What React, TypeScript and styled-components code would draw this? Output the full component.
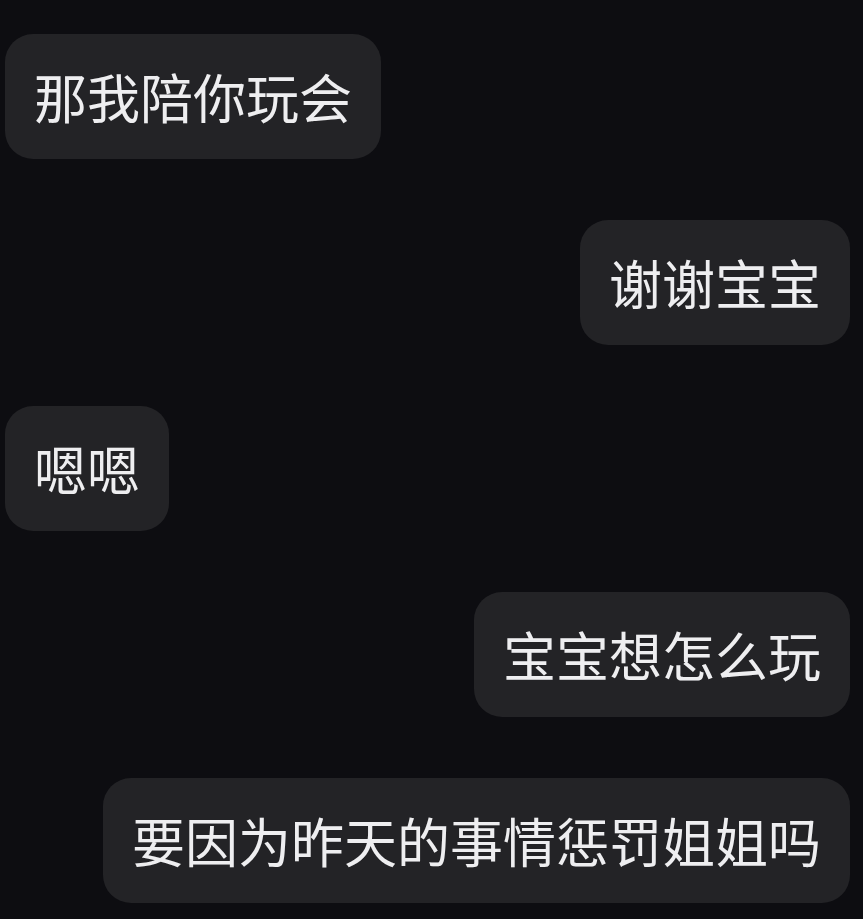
import styled, { createGlobalStyle } from 'styled-components';

const GlobalStyle = createGlobalStyle`
  html, body {
    margin: 0;
    padding: 0;
    background: #0d0d11;
  }
  body {
    font-family: "Noto Sans CJK SC", "Noto Sans", sans-serif;
  }
`

const Thread = styled.div`
  display: flex;
  flex-direction: column;
  gap: 61px;
  padding: 34px 13px 0 5px;
  min-height: 919px;
  box-sizing: border-box;
`

const Row = styled.div<{ $mine: boolean }>`
  display: flex;
  justify-content: ${(p) => (p.$mine ? 'flex-end' : 'flex-start')};
`

const Bubble = styled.div`
  background: #232326;
  color: #eeeef0;
  font-size: 53px;
  height: 125px;
  line-height: 125px;
  padding: 0 29px;
  border-radius: 28px;
  white-space: nowrap;
  box-sizing: border-box;
`

interface IMessage {
  text: string;
  mine: boolean;
}

const messages: Array<IMessage> = [
  { text: '那我陪你玩会', mine: false },
  { text: '谢谢宝宝', mine: true },
  { text: '嗯嗯', mine: false },
  { text: '宝宝想怎么玩', mine: true },
  { text: '要因为昨天的事情惩罚姐姐吗', mine: true },
]

const App = () => {
  return (
    <>
      <GlobalStyle />
      <Thread>
        {messages.map((msg, index) => (
          <Row key={index} $mine={msg.mine}>
            <Bubble>{msg.text}</Bubble>
          </Row>
        ))}
      </Thread>
    </>
  )
}

export default App;
